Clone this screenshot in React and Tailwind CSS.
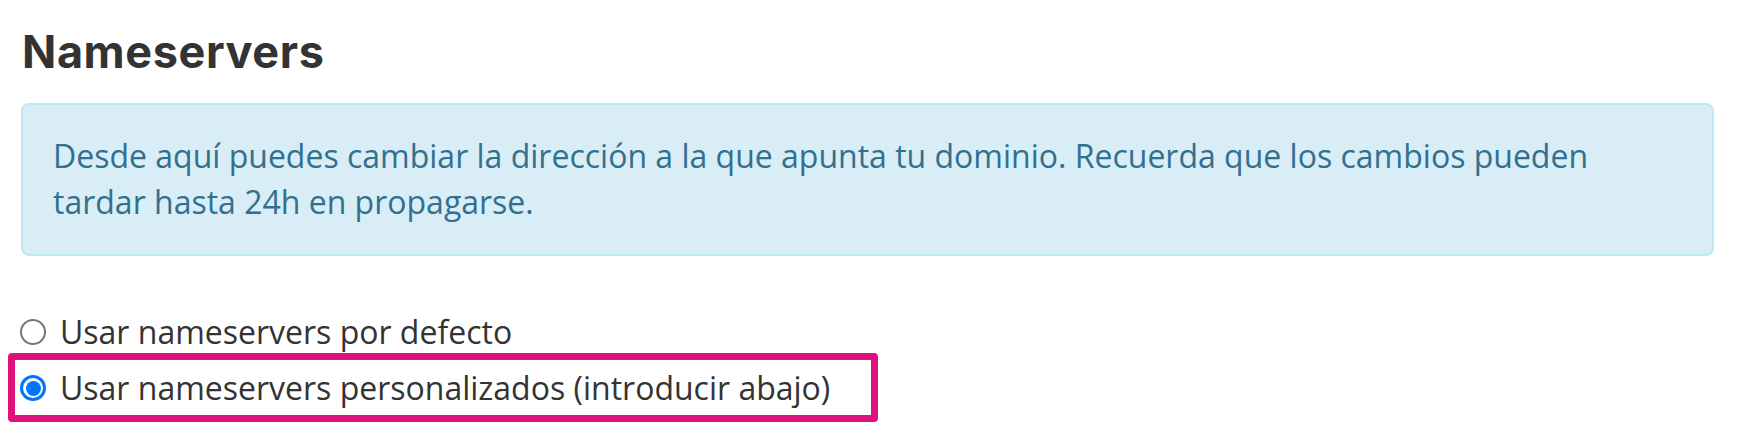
export default function App() {
  return (
    <div className="w-[1754px] h-[440px] bg-white px-[21px] pt-[24px] overflow-hidden">
      <h2 className="font-['Inter',sans-serif] font-bold text-[45px] leading-[56px] text-[#333333] tracking-[0.6px] ml-[1px]">
        Nameservers
      </h2>
      <div className="mt-[23px] w-[1693px] h-[153px] rounded-[8px] border-2 border-[#bce8f1] bg-[#d9edf7] px-[30px] pt-[28px] font-['Open_Sans',sans-serif] text-[32px] leading-[46px] text-[#31708f]">
        Desde aquí puedes cambiar la dirección a la que apunta tu dominio. Recuerda que los cambios pueden tardar hasta 24h en propagarse.
      </div>
      <div className="mt-[53px] font-['Open_Sans',sans-serif] text-[32px] leading-[46px] text-[#333333]">
        <label className="flex items-center h-[46px] gap-[14px]">
          <span className="w-[26px] h-[26px] rounded-full border-2 border-[#767676] bg-white shrink-0 -ml-[1px]" />
          <span>Usar nameservers por defecto</span>
        </label>
        <div className="-ml-[13px] -mt-[2px] w-[870px] h-[69px] rounded-[4px] border-[7px] border-[#e0117f] pl-[5px] pt-[5px]">
          <label className="flex items-center h-[46px] gap-[14px]">
            <span className="w-[26px] h-[26px] rounded-full border-[3px] border-[#0075ff] bg-white shrink-0 flex items-center justify-center">
              <span className="w-[15px] h-[15px] rounded-full bg-[#0075ff]" />
            </span>
            <span>Usar nameservers personalizados (introducir abajo)</span>
          </label>
        </div>
      </div>
    </div>
  );
}
